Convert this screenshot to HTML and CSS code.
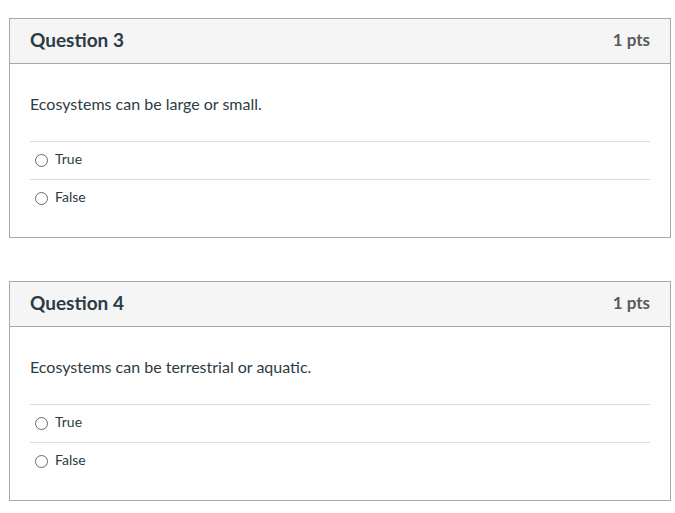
FILE: index.html
```html
<!DOCTYPE html>
<html lang="en">
  <head>
    <meta charset="UTF-8" />
    <meta name="viewport" content="width=device-width, initial-scale=1.0" />
    <title>Quiz</title>
    <link rel="stylesheet" href="styles.css">
  </head>
  <body>
    <div class="quiz">
      <div class="question">
        <div class="question-header">
          <span class="question-name">Question 3</span>
          <span class="question-points">1 pts</span>
        </div>
        <div class="question-body">
          <p class="question-text">Ecosystems can be large or small.</p>
          <div class="answers">
            <label class="answer"><span class="radio"></span>True</label>
            <label class="answer"><span class="radio"></span>False</label>
          </div>
        </div>
      </div>

      <div class="question">
        <div class="question-header">
          <span class="question-name">Question 4</span>
          <span class="question-points">1 pts</span>
        </div>
        <div class="question-body">
          <p class="question-text">Ecosystems can be terrestrial or aquatic.</p>
          <div class="answers">
            <label class="answer"><span class="radio"></span>True</label>
            <label class="answer"><span class="radio"></span>False</label>
          </div>
        </div>
      </div>
    </div>
  </body>
</html>
```

FILE: styles.css
```css
body {
  font-family: Lato, "Open Sans", sans-serif;
  margin: 0;
  background-color: #fff;
  color: #2d3b45;
}

.quiz {
  display: flex;
  flex-direction: column;
  gap: 43px;
  padding: 18px 4px 0 9px;
}

.question {
  border: 1px solid #a8a8a8;
  background-color: #fff;
}

.question-header {
  display: flex;
  justify-content: space-between;
  align-items: center;
  box-sizing: border-box;
  height: 45px;
  padding: 0 20px 3px;
  background-color: #f5f5f5;
  border-bottom: 1px solid #a8a8a8;
}

.question-name {
  font-size: 19px;
  font-weight: bold;
  color: #2d3b45;
}

.question-points {
  font-size: 17px;
  font-weight: bold;
  color: #5a5a5a;
}

.question-body {
  padding: 30px 20px 20px;
}

.question-text {
  margin: 0 0 27px;
  font-size: 16px;
  line-height: 20px;
}

.answer {
  display: flex;
  align-items: center;
  gap: 7px;
  box-sizing: border-box;
  height: 38px;
  padding: 0 0 5px 5px;
  border-top: 1px solid #dcdcdc;
  font-size: 14px;
  color: #2d3b45;
}

.radio {
  width: 11px;
  height: 11px;
  margin-top: 4px;
  border: 1px solid #6a6a6a;
  border-radius: 50%;
  background-color: #fff;
}
```
